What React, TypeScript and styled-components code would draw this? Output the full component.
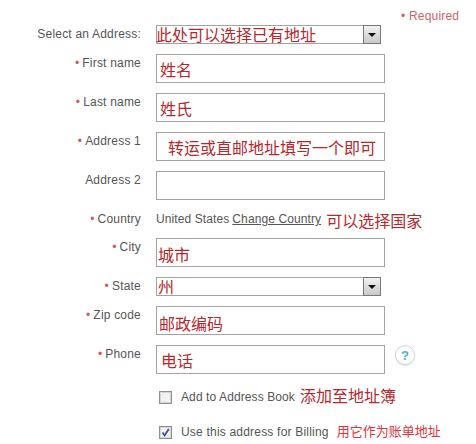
import React from 'react';
import styled, { createGlobalStyle } from 'styled-components';

const GlobalStyle = createGlobalStyle`
  html, body {
    margin: 0;
    height: 444px;
    overflow: hidden;
    background: #fff;
  }
`;

const Page = styled.div`
  width: 476px;
  height: 444px;
  padding-top: 8px;
  box-sizing: border-box;
  font-family: "Liberation Sans", Arial, sans-serif;
  font-size: 12px;
  color: #555;
`;

const RequiredNote = styled.div`
  height: 17px;
  line-height: 17px;
  padding-left: 401px;
  color: #cf5f6b;
  letter-spacing: 0.2px;
`;

const Form = styled.form`
  display: flex;
  flex-direction: column;
  gap: 10px;
`;

const Row = styled.div`
  display: grid;
  grid-template-columns: 141px 1fr;
  column-gap: 15px;
`;

const Label = styled.label`
  padding-top: 1px;
  text-align: right;
  line-height: 16px;
  white-space: nowrap;
  letter-spacing: 0.2px;
`;

const Bullet = styled.span`
  color: #c9605f;
  margin-right: 3px;
`;

const Controls = styled.div`
  display: flex;
  align-items: flex-start;
`;

const TextField = styled.input<{ $left: number; $top?: number }>`
  width: 229px;
  height: 29px;
  box-sizing: border-box;
  border: 1px solid #a3a3a3;
  border-radius: 0;
  margin: 0;
  padding: ${({ $top = 0 }) => $top}px 0 0 ${({ $left }) => $left}px;
  background: #fff;
  outline: none;
  font-family: "Noto Sans CJK SC", sans-serif;
  font-size: 16px;
  color: #b3282d;
`;

const SelectBox = styled.div`
  width: 225px;
  height: 19px;
  box-sizing: border-box;
  display: flex;
  justify-content: space-between;
  border: 1px solid #a3a3a3;
  border-right: 0;
  background: #fff;
`;

const SelectValue = styled.span<{ $left: number }>`
  margin-left: ${({ $left }) => $left}px;
  font-family: "Noto Sans CJK SC", sans-serif;
  font-size: 16px;
  line-height: 17px;
  color: #b3282d;
`;

const SelectArrow = styled.span`
  width: 18px;
  height: 19px;
  margin-top: -1px;
  box-sizing: border-box;
  display: flex;
  align-items: center;
  justify-content: center;
  border: 1px solid #777;
  background: linear-gradient(#f2f2f2, #c9c9c9);

  &::after {
    content: '';
    border-top: 4px solid #111;
    border-left: 4px solid transparent;
    border-right: 4px solid transparent;
  }
`;

const CountryLine = styled.div`
  display: flex;
  height: 18px;
  padding-top: 1px;
  box-sizing: border-box;
  line-height: 16px;
  letter-spacing: 0.1px;
  white-space: nowrap;
`;

const ChangeLink = styled.a`
  margin-left: 3px;
  color: #555;
  text-decoration: underline;
  height: 16px;
`;

const Note = styled.span<{ $size?: number; $bright?: boolean }>`
  font-family: "Noto Sans CJK SC", sans-serif;
  font-size: ${({ $size = 16 }) => $size}px;
  color: ${({ $bright }) => ($bright ? '#e0343a' : '#b3282d')};
  letter-spacing: 0;
`;

const CountryNote = styled(Note)`
  margin-left: 5px;
  line-height: 18px;
`;

const HelpIcon = styled.span`
  width: 20px;
  height: 20px;
  box-sizing: border-box;
  margin-left: 10px;
  display: flex;
  align-items: center;
  justify-content: center;
  border: 1px solid #c9d6d6;
  border-radius: 50%;
  box-shadow: 0 1px 1px #ddd;
  color: #43b5c4;
  font-size: 13px;
  font-weight: bold;
`;

const CheckList = styled.div`
  display: flex;
  flex-direction: column;
  gap: 11px;
  margin-top: 11px;
  padding-left: 159px;
`;

const CheckRow = styled.div<{ $spacing: number }>`
  height: 24px;
  display: flex;
  align-items: center;
  letter-spacing: ${({ $spacing }) => $spacing}px;
  white-space: nowrap;
`;

const CheckBox = styled.span`
  width: 13px;
  height: 13px;
  box-sizing: border-box;
  margin-right: 9px;
  display: flex;
  border: 1px solid #8f8f8f;
  box-shadow: inset 0 0 0 1px #d5d5d5;
  background: #f1f1f1;
`;

const CheckNote = styled(Note)<{ $gap: number }>`
  margin-left: ${({ $gap }) => $gap}px;
  position: relative;
  top: -2px;
`;

const Tick = () => (
  <svg width="11" height="11" viewBox="0 0 11 11">
    <path d="M2.5 5.5 L4.6 8.5 L8.8 2" fill="none" stroke="#3f4f8a" strokeWidth="1.8" />
  </svg>
);

const Req = () => <Bullet>•</Bullet>;

export default function App() {
  return (
    <Page>
      <GlobalStyle />
      <RequiredNote>• Required</RequiredNote>
      <Form>
        <Row>
          <Label>Select an Address:</Label>
          <Controls>
            <SelectBox>
              <SelectValue $left={-1}>此处可以选择已有地址</SelectValue>
              <SelectArrow />
            </SelectBox>
          </Controls>
        </Row>
        <Row>
          <Label><Req />First name</Label>
          <Controls><TextField $left={3} readOnly value="姓名" /></Controls>
        </Row>
        <Row>
          <Label><Req />Last name</Label>
          <Controls><TextField $left={3} readOnly value="姓氏" /></Controls>
        </Row>
        <Row>
          <Label><Req />Address 1</Label>
          <Controls><TextField $left={11} readOnly value="转运或直邮地址填写一个即可" /></Controls>
        </Row>
        <Row>
          <Label>Address 2</Label>
          <Controls><TextField $left={3} readOnly value="" /></Controls>
        </Row>
        <Row>
          <Label><Req />Country</Label>
          <CountryLine>
            United States
            <ChangeLink>Change Country</ChangeLink>
            <CountryNote>可以选择国家</CountryNote>
          </CountryLine>
        </Row>
        <Row>
          <Label><Req />City</Label>
          <Controls><TextField $left={1} $top={2} readOnly value="城市" /></Controls>
        </Row>
        <Row>
          <Label><Req />State</Label>
          <Controls>
            <SelectBox>
              <SelectValue $left={1}>州</SelectValue>
              <SelectArrow />
            </SelectBox>
          </Controls>
        </Row>
        <Row>
          <Label><Req />Zip code</Label>
          <Controls><TextField $left={2} $top={4} readOnly value="邮政编码" /></Controls>
        </Row>
        <Row>
          <Label><Req />Phone</Label>
          <Controls>
            <TextField $left={4} $top={1} readOnly value="电话" />
            <HelpIcon>?</HelpIcon>
          </Controls>
        </Row>
      </Form>
      <CheckList>
        <CheckRow $spacing={0.1}>
          <CheckBox />
          Add to Address Book
          <CheckNote $gap={5}>添加至地址簿</CheckNote>
        </CheckRow>
        <CheckRow $spacing={0.2}>
          <CheckBox><Tick /></CheckBox>
          Use this address for Billing
          <CheckNote $gap={8} $size={13} $bright>用它作为账单地址</CheckNote>
        </CheckRow>
      </CheckList>
    </Page>
  );
}
